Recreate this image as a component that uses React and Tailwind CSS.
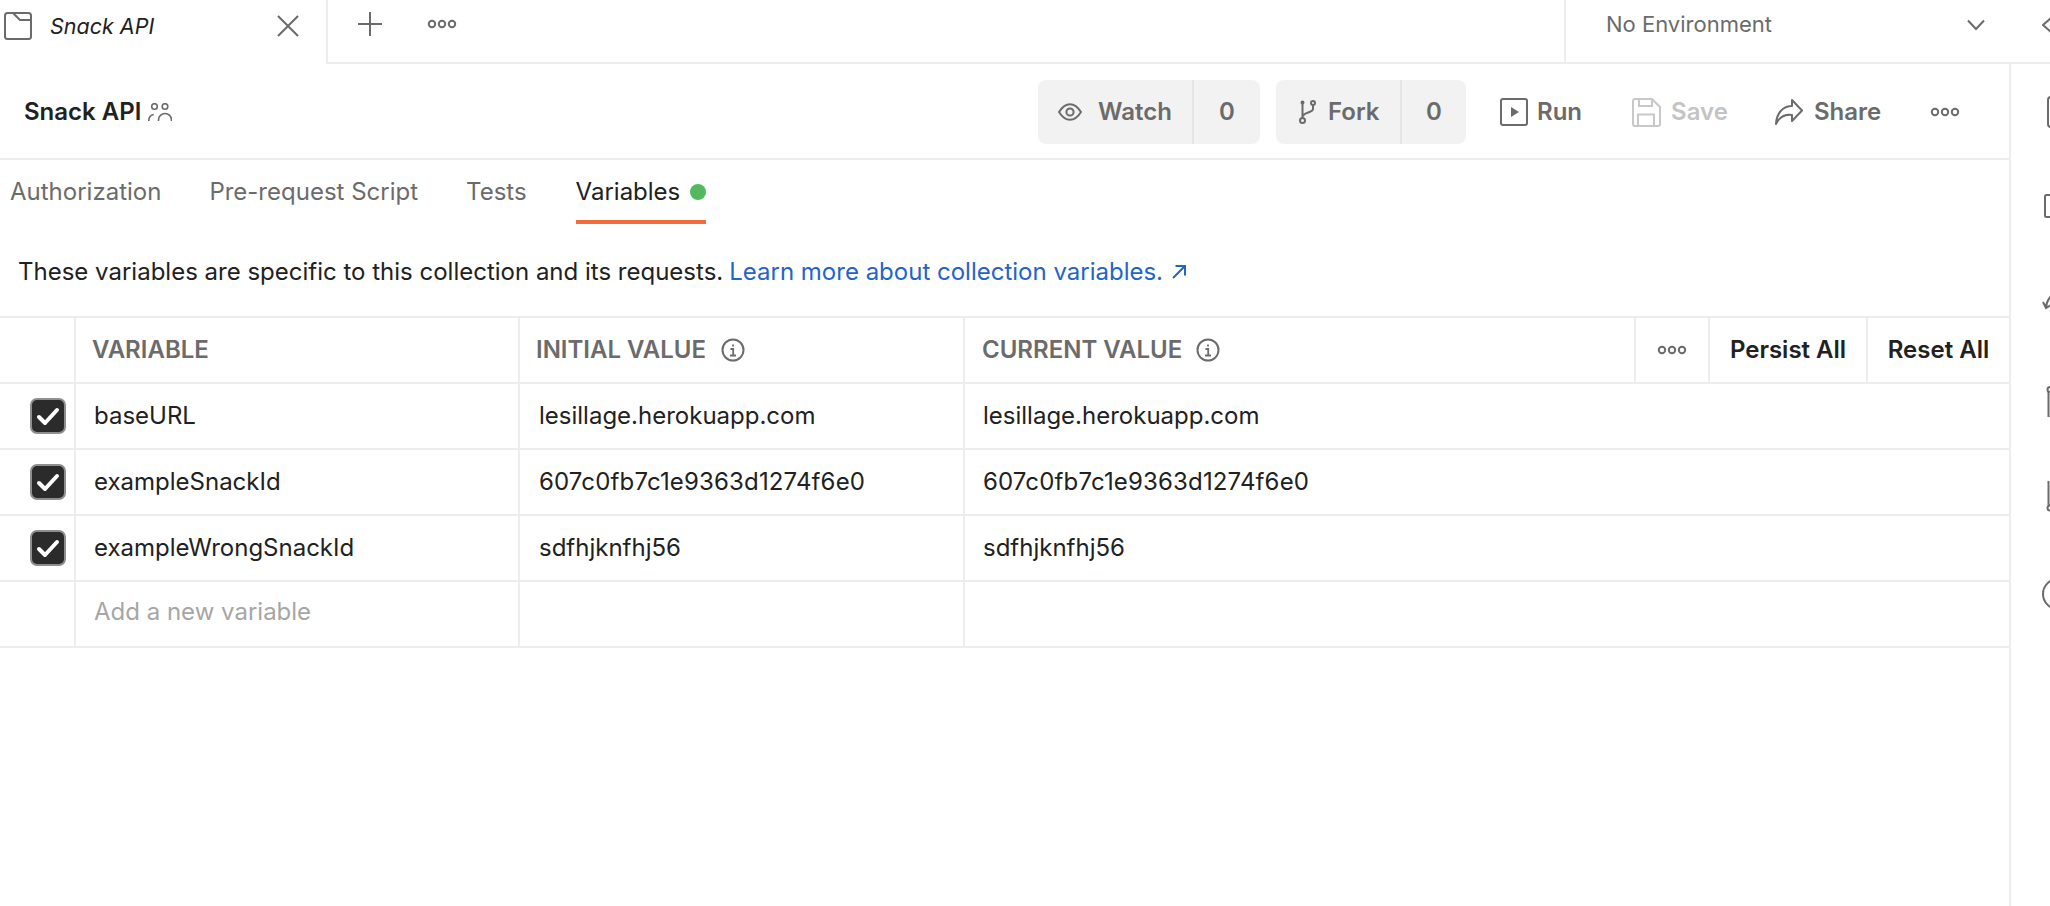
import React from "react";

const G = "#6b6b6b";
const Dots = ({ className = "" }) => (
  <svg width="30" height="10" viewBox="0 0 30 10" fill="none" stroke={G} strokeWidth="2" className={className}>
    <circle cx="5" cy="5" r="3.2" />
    <circle cx="15" cy="5" r="3.2" />
    <circle cx="25" cy="5" r="3.2" />
  </svg>
);
const Info = () => (
  <svg width="24" height="24" viewBox="0 0 24 24" fill="none" stroke={G} strokeWidth="2">
    <circle cx="12" cy="12" r="10.5" />
    <path d="M12 6.5v2M9.5 11H12.2v6.5M9 17.5h6" strokeWidth="1.8" />
  </svg>
);
const Check = () => (
  <div className="flex h-[36px] w-[36px] items-center justify-center rounded-[7px] border-2 border-[#8f8f8f] bg-[#2b2b2b]">
    <svg width="24" height="20" viewBox="0 0 24 20" fill="none" stroke="#fff" strokeWidth="4" strokeLinecap="round" strokeLinejoin="round">
      <path d="M3 11l6 6L21 4" />
    </svg>
  </div>
);

const rows = [
  ["baseURL", "lesillage.herokuapp.com", ""],
  ["exampleSnackId", "607c0fb7c1e9363d1274f6e0", "tracking-[0.15px]"],
  ["exampleWrongSnackId", "sdfhjknfhj56", ""],
];

function Row({ name, value, valueClass }) {
  return (
    <div className="flex h-[66px] border-b-2 border-[#ededed] text-[24px] text-[#212121]">
      <div className="flex w-[76px] shrink-0 items-center justify-end border-r-2 border-[#ededed] pr-[8px]">
        <Check />
      </div>
      <div className="flex w-[444px] shrink-0 items-center border-r-2 border-[#ededed] pl-[18px]">{name}</div>
      <div className="flex w-[445px] shrink-0 items-center border-r-2 border-[#ededed] pl-[19px]">
        <span className={valueClass}>{value}</span>
      </div>
      <div className="flex flex-1 items-center pl-[18px]">
        <span className={valueClass}>{value}</span>
      </div>
    </div>
  );
}

export default function App() {
  return (
    <div className="h-[906px] w-[2050px] overflow-hidden bg-white font-['Inter',sans-serif] text-[#212121]">
      {/* Top tab bar */}
      <div className="flex h-[64px]">
        <div className="flex h-[64px] w-[328px] shrink-0 items-center border-r-2 border-[#ededed] pb-[12px] pl-[4px] pr-[27px]">
          <svg width="29" height="29" viewBox="0 0 29 29" fill="none" stroke={G} strokeWidth="2" className="shrink-0">
            <rect x="1" y="1" width="26" height="26" rx="2.5" />
            <path d="M9 1l7 7h11" />
          </svg>
          <span className="ml-[17px] text-[21.5px] italic">Snack API</span>
          <svg width="22" height="22" viewBox="0 0 22 22" fill="none" stroke={G} strokeWidth="2" className="ml-auto">
            <path d="M1 1l20 20M21 1L1 21" />
          </svg>
        </div>
        <div className="flex flex-1 items-start border-b-2 border-[#ededed]">
          <svg width="26" height="26" viewBox="0 0 26 26" fill="none" stroke={G} strokeWidth="2" className="ml-[29px] mt-[11px]">
            <path d="M13 1v24M1 13h24" />
          </svg>
          <Dots className="ml-[44px] mt-[19px]" />
          <div className="ml-[1107px] flex h-full w-[486px] shrink-0 items-start whitespace-nowrap border-l-2 border-[#ededed] pl-[40px] pt-[8px] text-[22px] text-[#6b6b6b]">
            No Environment
            <svg width="18" height="12" viewBox="0 0 18 12" fill="none" stroke={G} strokeWidth="2" className="ml-[195px] mt-[11px] shrink-0">
              <path d="M1 1.5l8 8.5 8-8.5" />
            </svg>
            <svg width="10" height="16" viewBox="0 0 10 16" fill="none" stroke={G} strokeWidth="2" className="ml-[57px] mt-[9px] shrink-0">
              <path d="M9 1L1 8l8 7" />
            </svg>
          </div>
        </div>
      </div>

      <div className="flex h-[842px]">
        <div className="w-[2009px] shrink-0">
          {/* Title row */}
          <div className="flex h-[96px] items-center border-b-2 border-[#ededed] pl-[24px] pt-[2px]">
            <div className="flex w-[1014px] shrink-0 items-center">
              <span className="text-[24px] font-semibold">Snack API</span>
              <svg width="24" height="18" viewBox="0 0 24 18" fill="none" stroke={G} strokeWidth="1.6" className="ml-[7px]">
                <circle cx="6.5" cy="3.5" r="2.8" />
                <circle cx="17" cy="3.5" r="2.8" />
                <path d="M.8 18v-1a6 6 0 0 1 5-5.5M10.5 18v-1a6.5 6.5 0 0 1 13 0v1" />
              </svg>
            </div>
            <div className="flex h-[64px] w-[222px] shrink-0 items-center rounded-[8px] bg-[#f2f2f2] text-[24px] font-semibold text-[#6b6b6b]">
              <div className="flex h-full w-[156px] shrink-0 items-center border-r-2 border-[#e6e6e6] pl-[20px]">
                <svg width="24" height="18" viewBox="0 0 24 18" fill="none" stroke={G} strokeWidth="2">
                  <path d="M1 9C4.5 3.5 8 1.2 12 1.2S19.5 3.5 23 9c-3.5 5.5-7 7.8-11 7.8S4.5 14.5 1 9z" />
                  <circle cx="12" cy="9" r="3.6" />
                </svg>
                <span className="ml-[16px]">Watch</span>
              </div>
              <span className="flex-1 text-center">0</span>
            </div>
            <div className="ml-[16px] flex h-[64px] w-[190px] shrink-0 items-center rounded-[8px] bg-[#f2f2f2] text-[24px] font-semibold text-[#6b6b6b]">
              <div className="flex h-full w-[126px] shrink-0 items-center border-r-2 border-[#e6e6e6] pl-[23px]">
                <svg width="18" height="24" viewBox="0 0 18 24" fill="none" stroke={G} strokeWidth="2">
                  <circle cx="3.5" cy="20.5" r="2.5" />
                  <circle cx="14" cy="3" r="2" />
                  <circle cx="3.5" cy="2.5" r="1" />
                  <path d="M3.5 18V3.5M14 5v4c0 4-10.5 3-10.5 8" />
                </svg>
                <span className="ml-[11px]">Fork</span>
              </div>
              <span className="flex-1 text-center">0</span>
            </div>
            <svg width="28" height="28" viewBox="0 0 28 28" fill="none" stroke={G} strokeWidth="2" className="ml-[34px] shrink-0">
              <rect x="1" y="1" width="26" height="26" rx="2" />
              <path d="M11 9l8 5-8 5z" fill={G} stroke="none" />
            </svg>
            <span className="ml-[9px] text-[24px] font-semibold text-[#6b6b6b]">Run</span>
            <svg width="29" height="29" viewBox="0 0 29 29" fill="none" stroke="#c8c8c8" strokeWidth="2" className="ml-[50px] shrink-0">
              <path d="M1 3a2 2 0 0 1 2-2h17l8 8v17a2 2 0 0 1-2 2H3a2 2 0 0 1-2-2z" />
              <path d="M7 1v7h13V1M6 28V16.5h16V28" />
            </svg>
            <span className="ml-[10px] text-[24px] font-semibold text-[#c4c4c4]">Save</span>
            <svg width="28" height="26" viewBox="0 0 28 26" fill="none" stroke={G} strokeWidth="2" strokeLinejoin="round" className="ml-[47px] shrink-0">
              <path d="M1 25C1.5 14 8 7 17 7V1l10 10.5L17 22v-6C10 15 4.5 18 1 25z" />
            </svg>
            <span className="ml-[11px] text-[24px] font-semibold text-[#6b6b6b]">Share</span>
            <Dots className="ml-[49px] shrink-0" />
          </div>

          {/* Tabs */}
          <div className="flex h-[64px] items-start gap-[48px] pl-[10px] pt-[14px] text-[24px] text-[#6b6b6b]">
            <span>Authorization</span>
            <span>Pre-request Script</span>
            <span>Tests</span>
            <div className="ml-[1px] flex h-[50px] w-[130px] items-start border-b-4 border-[#f26b3a] text-[#212121]">
              <span>Variables</span>
              <span className="ml-auto mt-[10px] h-[16px] w-[16px] rounded-full bg-[#54b85f]" />
            </div>
          </div>

          {/* Description */}
          <div className="flex h-[92px] items-start pl-[18px] pt-[34px] text-[24px] leading-[28px]">
            <span>These variables are specific to this collection and its requests.</span>
            <span className="ml-[6px] text-[#2463c9]">Learn more about collection variables.</span>
            <svg width="14" height="14" viewBox="0 0 14 14" fill="none" stroke="#2463c9" strokeWidth="2" className="ml-[9px] mt-[7px] shrink-0">
              <path d="M1 13L13 1M3.5 1H13v9.5" />
            </svg>
          </div>

          {/* Table */}
          <div className="border-t-2 border-[#ededed]">
            <div className="flex h-[66px] border-b-2 border-[#ededed] text-[24px] font-semibold text-[#6b6b6b]">
              <div className="w-[76px] shrink-0 border-r-2 border-[#ededed]" />
              <div className="flex w-[444px] shrink-0 items-center border-r-2 border-[#ededed] pl-[16px]">VARIABLE</div>
              <div className="flex w-[445px] shrink-0 items-center border-r-2 border-[#ededed] pl-[16px]">
                INITIAL VALUE<span className="ml-[15px] flex"><Info /></span>
              </div>
              <div className="flex w-[671px] shrink-0 items-center border-r-2 border-[#ededed] pl-[17px]">
                CURRENT VALUE<span className="ml-[14px] flex"><Info /></span>
              </div>
              <div className="flex w-[74px] shrink-0 items-center justify-center border-r-2 border-[#ededed]">
                <Dots />
              </div>
              <div className="flex w-[158px] shrink-0 items-center justify-center border-r-2 border-[#ededed] text-[#212121]">Persist All</div>
              <div className="flex flex-1 items-center justify-center text-[#212121]">Reset All</div>
            </div>
            {rows.map(([n, v, c]) => (
              <Row key={n} name={n} value={v} valueClass={c} />
            ))}
            <div className="flex h-[66px] border-b-2 border-[#ededed] text-[24px] text-[#a6a6a6]">
              <div className="w-[76px] shrink-0 border-r-2 border-[#ededed]" />
              <div className="flex w-[444px] shrink-0 items-center border-r-2 border-[#ededed] pb-[4px] pl-[18px]">Add a new variable</div>
              <div className="w-[445px] shrink-0 border-r-2 border-[#ededed]" />
            </div>
          </div>
        </div>

        {/* Right rail, clipped by the window edge */}
        <div className="flex min-w-0 flex-1 flex-col border-l-2 border-[#ededed]">
          <svg width="30" height="32" viewBox="0 0 30 32" fill="none" stroke={G} strokeWidth="2" className="ml-[36px] mt-[32px] shrink-0">
            <rect x="1" y="1" width="26" height="30" rx="3" />
          </svg>
          <svg width="30" height="24" viewBox="0 0 30 24" fill="none" stroke={G} strokeWidth="2" className="ml-[33px] mt-[66px] shrink-0">
            <rect x="1" y="1" width="26" height="22" rx="1.5" />
          </svg>
          <svg width="12" height="16" viewBox="0 0 12 16" fill="none" stroke={G} strokeWidth="2" className="ml-[31px] mt-[76px] shrink-0">
            <path d="M1 8l3 6 5-3M4 14C4 9 6 5 10 1" />
          </svg>
          <svg width="8" height="32" viewBox="0 0 8 32" fill="none" stroke={G} strokeWidth="2" className="ml-[35px] mt-[76px] shrink-0">
            <circle cx="4" cy="3.5" r="2.5" />
            <path d="M2.5 6V31" />
          </svg>
          <svg width="8" height="32" viewBox="0 0 8 32" fill="none" stroke={G} strokeWidth="2" className="ml-[35px] mt-[62px] shrink-0">
            <circle cx="4" cy="28" r="2.5" />
            <path d="M2.5 25.5V1" />
          </svg>
          <svg width="32" height="32" viewBox="0 0 32 32" fill="none" stroke={G} strokeWidth="2" className="ml-[31px] mt-[66px] shrink-0">
            <circle cx="16" cy="16" r="15" />
          </svg>
        </div>
      </div>
    </div>
  );
}
